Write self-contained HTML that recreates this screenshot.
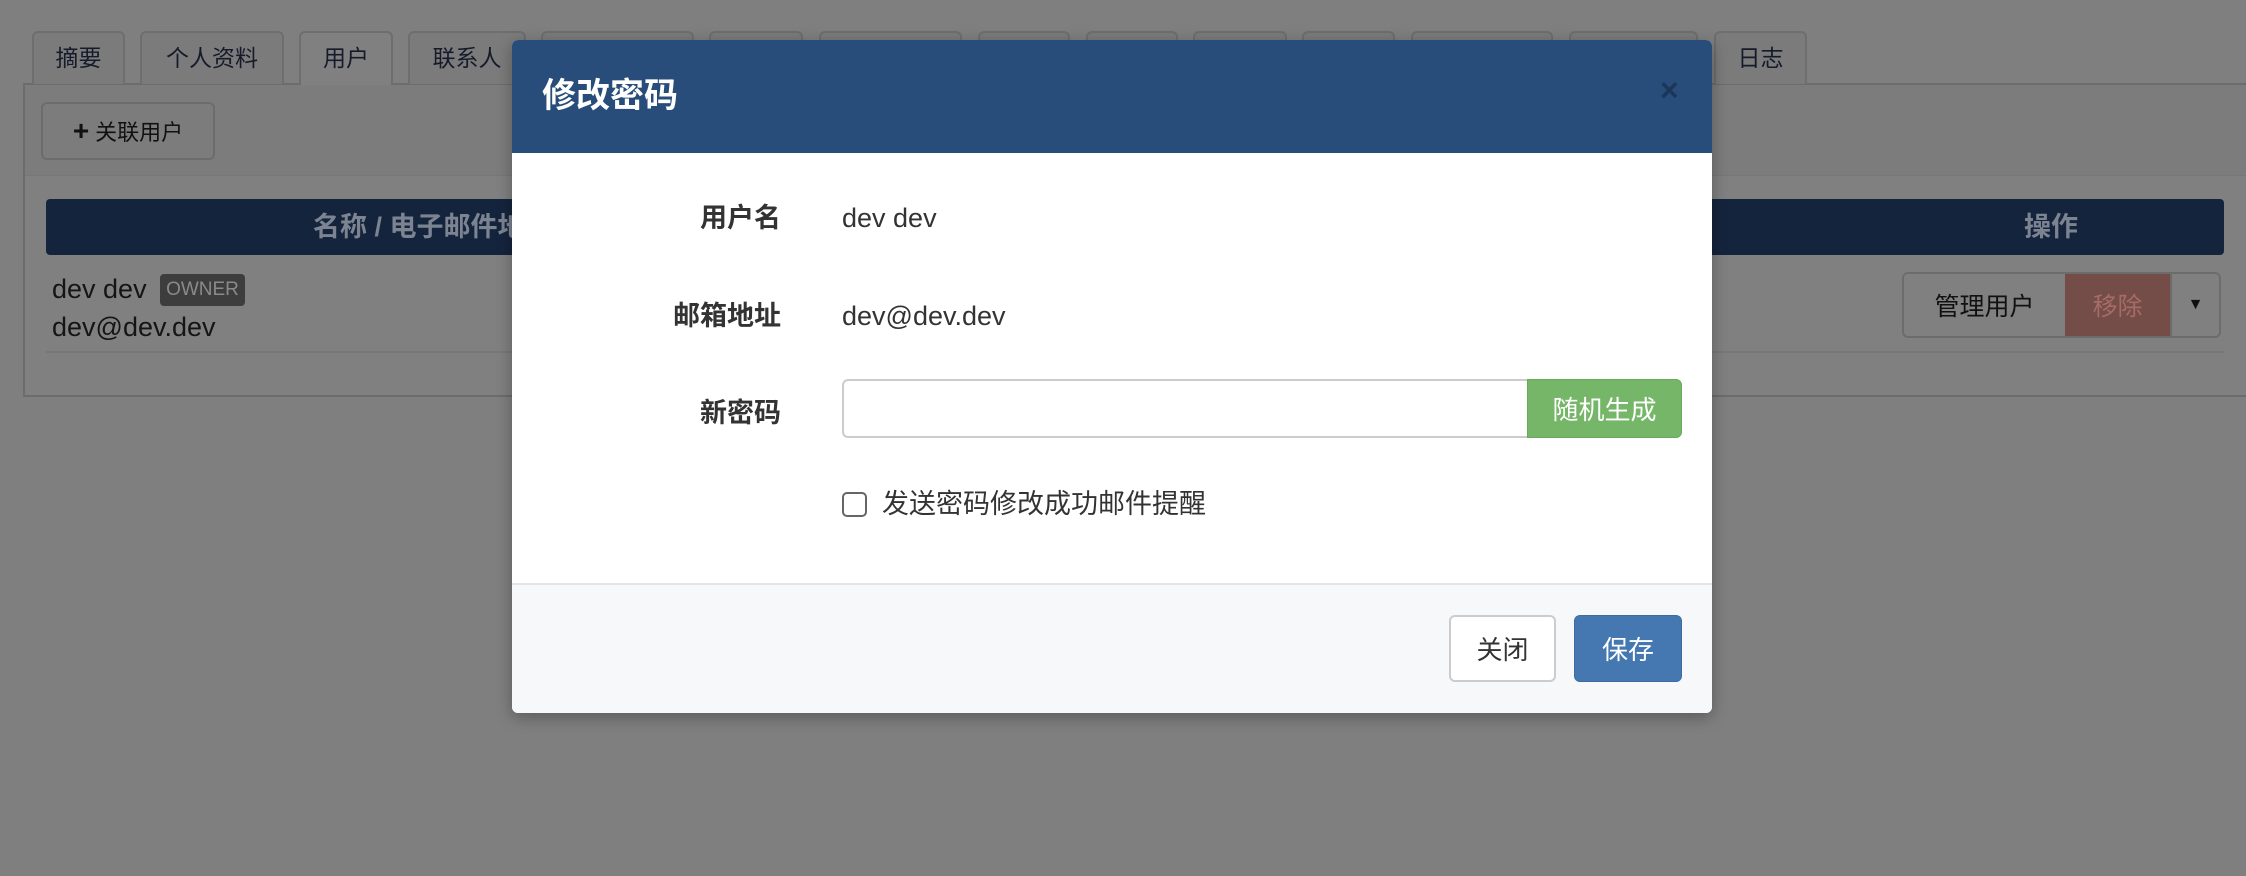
<!DOCTYPE html>
<html><head><meta charset="utf-8"><style>
*{box-sizing:border-box;margin:0;padding:0}
body{width:2246px;height:876px;background:#7f7f7f;position:relative;overflow:hidden;font-family:"Liberation Sans","Noto Sans CJK SC",sans-serif;}
.a{position:absolute}
.tab{position:absolute;top:31px;height:53px;border:2px solid #6e6e6e;border-bottom:none;border-radius:6px 6px 0 0;background:#7b7b7b;color:#151b2a;font-size:23px;line-height:50px;text-align:center}
.c{display:flex;align-items:center;justify-content:center}
</style></head><body>
<!-- panel -->
<div class="a" style="left:23px;top:83px;width:2240px;height:314px;border:2px solid #6c6c6c;background:#808080"></div>
<div class="a" style="left:25px;top:85px;width:2240px;height:91px;background:#7c7c7c;border-bottom:1px solid #777"></div>
<div class="tab" style="left:32px;width:93px">摘要</div>
<div class="tab" style="left:140px;width:144px">个人资料</div>
<div class="tab" style="left:299px;width:94px;background:#808080;height:54px">用户</div>
<div class="tab" style="left:408px;width:118px">联系人</div>
<div class="tab" style="left:541px;width:153px"></div>
<div class="tab" style="left:709px;width:94px"></div>
<div class="tab" style="left:819px;width:143px"></div>
<div class="tab" style="left:978px;width:92px"></div>
<div class="tab" style="left:1086px;width:92px"></div>
<div class="tab" style="left:1193px;width:94px"></div>
<div class="tab" style="left:1302px;width:93px"></div>
<div class="tab" style="left:1411px;width:142px"></div>
<div class="tab" style="left:1569px;width:129px"></div>
<div class="tab" style="left:1714px;width:93px">日志</div>
<div class="a c" style="left:41px;top:102px;width:174px;height:58px;border:2px solid #6c6c6c;border-radius:6px;font-size:22px;color:#111">
<span style="font-size:28px;font-weight:bold;margin-right:6px;line-height:1">+</span>关联用户</div>
<div class="a" style="left:46px;top:199px;width:2178px;height:56px;background:#15243d;border-radius:4px"></div>
<div class="a" style="left:313px;top:199px;line-height:56px;font-size:27px;font-weight:bold;color:#7c8391">名称 / 电子邮件地址</div>
<div class="a" style="left:2024px;top:199px;line-height:56px;font-size:27px;font-weight:bold;color:#7c8391">操作</div>
<div class="a" style="left:52px;top:270px;font-size:27px;line-height:38px;color:#151515">dev dev</div>
<div class="a c" style="left:160px;top:274px;width:85px;height:32px;background:#3d3d3d;border-radius:4px;color:#8a8a8a;font-size:19px">OWNER</div>
<div class="a" style="left:52px;top:308px;font-size:27px;line-height:38px;color:#151515">dev@dev.dev</div>
<div class="a" style="left:46px;top:351px;width:2178px;height:2px;background:#777"></div>
<div class="a" style="left:1902px;top:272px;width:319px;height:66px;border:2px solid #6c6c6c;border-radius:6px;display:flex;overflow:hidden">
<div class="c" style="width:161px;font-size:25px;color:#111">管理用户</div>
<div class="c" style="width:105px;background:#744c48;color:#a56b66;font-size:25px">移除</div>
<div class="c" style="flex:1;font-size:16px;color:#111;border-left:2px solid #6c6c6c">▼</div>
</div>
<!-- modal -->
<div class="a" style="left:512px;top:40px;width:1200px;height:673px;background:#fff;border-radius:6px;overflow:hidden;box-shadow:0 4px 16px rgba(0,0,0,.3)">
<div class="a" style="left:0;top:0;width:1200px;height:113px;background:#284d7a"></div>
<div class="a" style="left:30px;top:0;line-height:113px;font-size:34px;font-weight:bold;color:#fff">修改密码</div>
<div class="a" style="left:1148px;top:30px;font-size:32px;font-weight:bold;color:#1c3659;line-height:40px">×</div>
<div class="a" style="right:931px;top:158px;font-size:27px;font-weight:bold;color:#333;line-height:40px;white-space:nowrap">用户名</div>
<div class="a" style="left:330px;top:158px;font-size:27px;color:#333;line-height:40px">dev dev</div>
<div class="a" style="right:931px;top:256px;font-size:27px;font-weight:bold;color:#333;line-height:40px;white-space:nowrap">邮箱地址</div>
<div class="a" style="left:330px;top:256px;font-size:27px;color:#333;line-height:40px">dev@dev.dev</div>
<div class="a" style="right:931px;top:353px;font-size:27px;font-weight:bold;color:#333;line-height:40px;white-space:nowrap">新密码</div>
<div class="a" style="left:330px;top:339px;width:686px;height:59px;border:2px solid #ccc;border-right:none;border-radius:6px 0 0 6px"></div>
<div class="a c" style="left:1015px;top:339px;width:155px;height:59px;background:#76b668;border:1px solid #6aa85c;border-radius:0 6px 6px 0;color:#fff;font-size:26px">随机生成</div>
<div class="a" style="left:330px;top:452px;width:25px;height:25px;border:2px solid #666;border-radius:5px"></div>
<div class="a" style="left:370px;top:444px;font-size:27px;color:#333;line-height:40px">发送密码修改成功邮件提醒</div>
<div class="a" style="left:0;top:543px;width:1200px;height:130px;background:#f7f8fa;border-top:2px solid #e3e4e6"></div>
<div class="a c" style="left:937px;top:575px;width:107px;height:67px;background:#fff;border:2px solid #ccc;border-radius:6px;font-size:26px;color:#333">关闭</div>
<div class="a c" style="left:1062px;top:575px;width:108px;height:67px;background:#4577b0;border:1px solid #3d6ca3;border-radius:6px;font-size:26px;color:#fff">保存</div>
</div>
</body></html>
